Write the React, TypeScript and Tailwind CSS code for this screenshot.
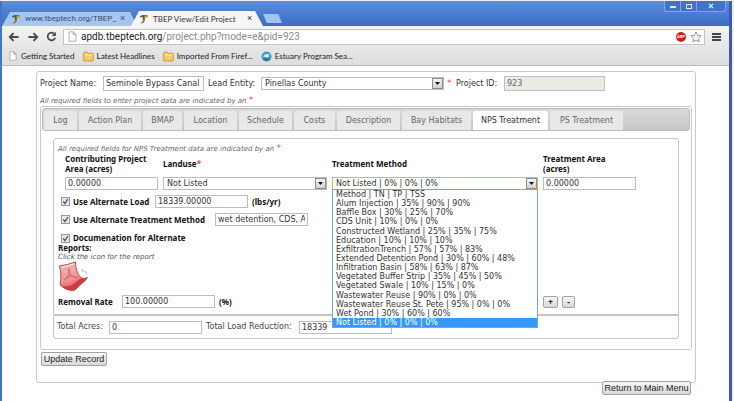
import { useState, type ReactNode } from "react";

const projectTabs = [
  { name: "Log", width: "w-[33px]" },
  { name: "Action Plan", width: "w-[62px]" },
  { name: "BMAP", width: "w-[39px]" },
  { name: "Location", width: "w-[53px]" },
  { name: "Schedule", width: "w-[53px]" },
  { name: "Costs", width: "w-[41px]" },
  { name: "Description", width: "w-[63px]" },
  { name: "Bay Habitats", width: "w-[69px]" },
  { name: "NPS Treatment", width: "w-[75px]" },
  { name: "PS Treatment", width: "w-[73px]" },
];

const methods = [
  "Method | TN | TP | TSS",
  "Alum Injection | 35% | 90% | 90%",
  "Baffle Box | 30% | 25% | 70%",
  "CDS Unit | 10% | 0% | 0%",
  "Constructed Wetland | 25% | 35% | 75%",
  "Education | 10% | 10% | 10%",
  "ExfiltrationTrench | 57% | 57% | 83%",
  "Extended Detention Pond | 30% | 60% | 48%",
  "Infiltration Basin | 58% | 63% | 87%",
  "Vegetated Buffer Strip | 35% | 45% | 50%",
  "Vegetated Swale | 10% | 15% | 0%",
  "Wastewater Reuse | 90% | 0% | 0%",
  "Wastewater Reuse St. Pete | 95% | 0% | 0%",
  "Wet Pond | 30% | 60% | 60%",
  "Not Listed | 0% | 0% | 0%",
];

const field =
  "border border-[#bdbdbd] bg-white px-[2px] font-['DejaVu_Sans',sans-serif] text-[8px] leading-[11px] font-normal text-[#333] outline-none";
const pushButton =
  "rounded-[2px] border border-[#a2a2a2] bg-linear-to-b from-[#f7f7f7] to-[#d9d9d9] text-[#222]";

function Star() {
  return <span className="text-[9px] leading-[8px] text-[#e8502e]">*</span>;
}

function SiteIcon() {
  return (
    <svg viewBox="0 0 10 10" className="size-[10px] shrink-0" aria-hidden="true">
      <path d="M1 2.2 C3 .8 6 .8 9 1.6 L8.6 3.2 L6 3 L5.6 7 C5.2 9 3.4 9.6 1.6 9.2 L3.6 7.8 L4 3.2 L1.4 3.6Z" fill="#5b5d45" />
      <path d="M5 2.6 L9 2 L8.6 3.4 L5.6 3.4Z" fill="#e2a83a" />
      <path d="M1.4 9.2 L4 8 L4.4 6" fill="none" stroke="#c99a3a" strokeWidth=".9" />
    </svg>
  );
}

function PageIcon({ className }: { className: string }) {
  return (
    <svg viewBox="0 0 9 11" className={className} aria-hidden="true">
      <path d="M1 .8h4.5L8 3.4v6.8H1z M5.3.8v2.8H8" fill="#fff" stroke="#9a9a9a" strokeWidth=".8" />
    </svg>
  );
}

function FolderIcon() {
  return (
    <svg viewBox="0 0 10 10" className="size-[11px] shrink-0" aria-hidden="true">
      <path d="M.6 1.6 Q.6 1 1.2 1h2.6l.9 1.1h4q.7 0 .7.7v5.6q0 .7-.7.7H1.3q-.7 0-.7-.7z" fill="#f3cb67" stroke="#c8922f" strokeWidth=".8" />
      <path d="M1.6 3.6h7" stroke="#fff0bd" strokeWidth="1" />
    </svg>
  );
}

function Check({ id }: { id: string }) {
  return (
    <span className="relative block size-[9px] shrink-0">
      <input
        id={id}
        type="checkbox"
        defaultChecked
        className="peer block size-[9px] appearance-none border border-[#9a9a9a] bg-[#e4e7ec]"
      />
      <svg viewBox="0 0 9 9" className="pointer-events-none invisible absolute inset-0 size-[9px] peer-checked:visible" aria-hidden="true">
        <path d="M2.2 4.4l1.7 2.2L6.9 2" fill="none" stroke="#44516e" strokeWidth="1.3" />
      </svg>
    </span>
  );
}

function DropSelect({
  id,
  width,
  border,
  value,
  children,
}: {
  id: string;
  width: string;
  border: string;
  value: string;
  children?: ReactNode;
}) {
  return (
    <span className={`relative block shrink-0 ${width}`}>
      <select
        id={id}
        defaultValue={value}
        className={`block h-[13px] w-full appearance-none border bg-white pr-3 pl-[3px] font-['DejaVu_Sans',sans-serif] text-[8px] leading-[11px] font-normal text-[#333] outline-none ${border}`}
      >
        <option>{value}</option>
      </select>
      <span className="pointer-events-none absolute top-px right-px flex h-[11px] w-[11px] items-center justify-center border border-[#8d8d8d] bg-linear-to-b from-[#f5f5f5] to-[#d2d2d2]">
        <svg viewBox="0 0 5 3" className="h-[3px] w-[5px]" aria-hidden="true">
          <path d="M0 0h5L2.5 3z" fill="#111" />
        </svg>
      </span>
      {children}
    </span>
  );
}

function TitleBar() {
  return (
    <div className="flex h-[25px] items-end bg-linear-to-b from-[#5a8ddb] to-[#3d6cc7]">
      <button className="flex h-[14px] w-[135px] items-center bg-[#a5c6f3] pr-[12px] pl-[9px] text-left text-[8px] text-[#3a4a66] [clip-path:polygon(0_100%,6%_0,95%_0,100%_100%)]">
        <SiteIcon />
        <span className="ml-[4px] flex-1 whitespace-nowrap">www.tbeptech.org/TBEP_</span>
        <span className="text-[9px]">×</span>
      </button>
      <button className="-ml-[6px] flex h-[15px] w-[132px] items-center bg-[#f6f6f6] pr-[11px] pl-[8px] text-left text-[8px] text-[#333] [clip-path:polygon(0_100%,6%_0,94%_0,100%_100%)]">
        <SiteIcon />
        <span className="ml-[4px] flex-1 font-[Lato,sans-serif] whitespace-nowrap">TBEP View/Edit Project</span>
        <span className="text-[9px]">×</span>
      </button>
      <button
        aria-label="New tab"
        className="mb-[3px] h-[9px] w-[19px] bg-[#a0c4f4] [clip-path:polygon(0_0,80%_0,100%_100%,20%_100%)]"
      />
      <div className="mr-[3px] ml-auto flex h-[11px] self-start rounded-b-[3px] border border-t-0 border-[#7fa5e4] bg-[#4273cb]">
        <button aria-label="Minimize" className="flex w-[16px] items-end justify-center border-r border-[#7fa5e4] pb-[3px]">
          <span className="h-[2px] w-[6px] bg-[#e4ecfa]" />
        </button>
        <button aria-label="Maximize" className="flex w-[16px] items-center justify-center border-r border-[#7fa5e4]">
          <span className="h-[5px] w-[6px] border border-[#e4ecfa]" />
        </button>
        <button aria-label="Close" className="flex w-[28px] items-center justify-center">
          <svg viewBox="0 0 6 6" className="size-[6px]" aria-hidden="true">
            <path d="M1 1l4 4M5 1L1 5" stroke="#e4ecfa" strokeWidth="1.2" />
          </svg>
        </button>
      </div>
    </div>
  );
}

function Toolbar() {
  return (
    <div className="flex h-[21px] items-center bg-linear-to-b from-[#f4f4f4] to-[#e6e6e6] pr-[8px] pl-[6px]">
      <button aria-label="Back">
        <svg viewBox="0 0 12 10" className="h-[10px] w-[12px]" aria-hidden="true">
          <path d="M5.5 1.2L1.8 5l3.7 3.8M2 5h8.6" fill="none" stroke="#4a4a4a" strokeWidth="1.9" />
        </svg>
      </button>
      <button aria-label="Forward" className="ml-[7px]">
        <svg viewBox="0 0 12 10" className="h-[10px] w-[12px]" aria-hidden="true">
          <path d="M6.5 1.2L10.2 5 6.5 8.8M10 5H1.4" fill="none" stroke="#4a4a4a" strokeWidth="1.9" />
        </svg>
      </button>
      <button aria-label="Reload" className="ml-[7px]">
        <svg viewBox="0 0 12 12" className="size-[11px]" aria-hidden="true">
          <path d="M9.2 3.2A4.2 4.2 0 1 0 10 7.4" fill="none" stroke="#4a4a4a" strokeWidth="1.9" />
          <path d="M10.8.8v4.6H6.2z" fill="#4a4a4a" />
        </svg>
      </button>
      <div className="ml-[6px] flex h-[16px] min-w-0 flex-1 items-center border border-[#c4c4c4] bg-white pr-[2px] pl-[4px]">
        <PageIcon className="h-[11px] w-[9px] shrink-0" />
        <div className="ml-[4px] flex-1 text-[10px] whitespace-nowrap text-[#8a8a8a]">
          <span className="text-[#222]">apdb.tbeptech.org</span>/project.php?mode=e&amp;pid=923
        </div>
        <span className="flex size-[10px] items-center justify-center rounded-full bg-[#c8281c] text-[4px] font-bold text-white">ABP</span>
        <svg viewBox="0 0 12 12" className="ml-[4px] size-[12px]" aria-hidden="true">
          <path d="M6 .9l1.5 3.4 3.7.4-2.8 2.5.8 3.7L6 9l-3.2 1.9.8-3.7L.8 4.7l3.7-.4z" fill="#fff" stroke="#8c8c8c" strokeWidth=".9" />
        </svg>
      </div>
      <button aria-label="Menu" className="ml-[7px] flex w-[9px] flex-col gap-px">
        <span className="h-[2px] bg-[#444]" />
        <span className="h-[2px] bg-[#444]" />
        <span className="h-[2px] bg-[#444]" />
      </button>
    </div>
  );
}

function Bookmarks() {
  return (
    <nav className="flex h-[19px] items-center gap-[8px] border-b border-[#bcbcbc] bg-linear-to-b from-[#e6e6e6] to-[#dedede] pl-[7px] font-[Lato,sans-serif] text-[8px] whitespace-nowrap text-[#222]">
      <a href="#start" className="flex items-center gap-[4px]">
        <PageIcon className="h-[10px] w-[8px]" />
        Getting Started
      </a>
      <a href="#news" className="flex items-center gap-[3px]">
        <FolderIcon />
        Latest Headlines
      </a>
      <a href="#imported" className="flex items-center gap-[3px]">
        <FolderIcon />
        Imported From Firef...
      </a>
      <a href="#estuary" className="flex items-center gap-[3px]">
        <svg viewBox="0 0 11 11" className="size-[11px]" aria-hidden="true">
          <circle cx="5.5" cy="5.5" r="5" fill="#3f9fc4" />
          <path d="M2 6c1-3 5-4 7-2-2 0-2 1-1 2-2 1-4-1-6 0z" fill="#d9f1f7" />
          <path d="M1.5 8c2-1 6-1 8 0-2 2.8-6 2.8-8 0z" fill="#2878a8" />
        </svg>
        Estuary Program Sea...
      </a>
    </nav>
  );
}

function ReportIcon() {
  return (
    <svg viewBox="0 0 31 31" className="block h-[31px] w-[31px]" aria-hidden="true">
      <defs>
        <linearGradient id="sheet" x1=".3" y1="0" x2=".6" y2="1">
          <stop offset="0" stopColor="#f3b3b1" />
          <stop offset=".55" stopColor="#ee9a98" />
          <stop offset="1" stopColor="#d9474a" />
        </linearGradient>
      </defs>
      <path d="M1.5 5 Q9 4 17.5 1 C17.5 7 19 13 23.5 17 Q26 18.5 29.5 16.5 C27 21 22 23 19.5 26.5 Q17 30 13.5 29.5 C9 29 5 27 2 23.5 C3.5 17 3 11 1.5 5Z" fill="url(#sheet)" stroke="#b04c4c" strokeWidth="1" />
      <path d="M2 23.5 C6 26 11 26 14 24 C18 21 20 19 23.5 17 Q26 18.5 29.5 16.5 C27 21 22 23 19.5 26.5 Q17 30 13.5 29.5 C9 29 5 27 2 23.5Z" fill="#cf3b3f" />
      <path d="M3.5 6 Q10 5 16 2.8" fill="none" stroke="#fdeeee" strokeWidth="1.2" />
      <path d="M6 19 C10 17 12.5 12 11 8 C9.5 12 14 17 19 16.5 C15 14 9 15.5 6 19Z" fill="none" stroke="#d86668" strokeWidth="1.1" />
      <path d="M24 8l1.5 3M27 10l1.5 2.5" stroke="#c98a8a" strokeWidth=".9" />
    </svg>
  );
}

function MethodList({ selected, onPick }: { selected: string; onPick: (name: string) => void }) {
  return (
    <ul
      role="listbox"
      aria-label="Treatment methods"
      className="absolute top-[12px] left-0 z-10 flex h-[139px] w-full flex-col border border-[#7fa6bd] bg-white font-['DejaVu_Sans',sans-serif] text-[8px] leading-[9px] font-normal text-[#333]"
    >
      {methods.map((name) => (
        <li
          key={name}
          role="option"
          aria-selected={name === selected}
          onClick={() => onPick(name)}
          className="flex flex-1 items-center pl-[3px] whitespace-nowrap aria-selected:bg-[#3399ff] aria-selected:text-white"
        >
          {name}
        </li>
      ))}
    </ul>
  );
}

function TreatmentForm() {
  const [method, setMethod] = useState("Not Listed | 0% | 0% | 0%");
  return (
    <>
      <section className="rounded-t-[3px] border border-[#c4c4c4] pt-[5px] pb-[6px] pl-[4px] text-[8px] font-bold text-[#111]">
        <p className="h-[9px] font-['DejaVu_Sans',sans-serif] text-[7px] leading-[9px] font-normal text-[#666] italic">
          All required fields for NPS Treatment data are indicated by an <Star />
        </p>
        <div className="grid grid-cols-[93px_164px_206px_93px] grid-rows-[24px_13px] gap-x-[5px] pl-[7px] leading-[10px]">
          <label htmlFor="area" className="pt-px">Contributing Project<br />Area (acres)</label>
          <label htmlFor="landuse" className="pt-[6px]">Landuse<Star /></label>
          <label htmlFor="method" className="pt-[6px]">Treatment Method</label>
          <label htmlFor="treated" className="pt-px">Treatment Area<br />(acres)</label>
          <input id="area" defaultValue="0.00000" className={`h-[13px] w-full ${field}`} />
          <DropSelect id="landuse" width="w-full" border="border-[#bdbdbd]" value="Not Listed" />
          <DropSelect key={method} id="method" width="w-full" border="border-[#d9b45a]" value={method}>
            <MethodList selected={method} onPick={setMethod} />
          </DropSelect>
          <input id="treated" defaultValue="0.00000" className={`h-[13px] w-full ${field}`} />
        </div>
        <div className="mt-[5px] flex h-[13px] items-center pl-[3px]">
          <Check id="altLoad" />
          <label htmlFor="altLoad" className="w-[85px] pl-[3px]">Use Alternate Load</label>
          <input aria-label="Alternate load" defaultValue="18339.00000" className={`h-[13px] w-[93px] ${field}`} />
          <span className="ml-[4px]">(lbs/yr)</span>
        </div>
        <div className="mt-[5px] flex h-[13px] items-center pl-[3px]">
          <Check id="altMethod" />
          <label htmlFor="altMethod" className="w-[145px] pl-[3px]">Use Alternate Treatment Method</label>
          <input aria-label="Alternate treatment method" defaultValue="wet detention, CDS, Alum" className={`h-[13px] w-[93px] ${field}`} />
        </div>
        <div className="mt-[7px] flex h-[10px] items-center pl-[3px]">
          <Check id="altDoc" />
          <label htmlFor="altDoc" className="pl-[3px]">Documenation for Alternate</label>
        </div>
        <p className="leading-[10px]">Reports:</p>
        <p className="font-['DejaVu_Sans',sans-serif] text-[7px] leading-[8px] font-normal text-[#555] italic">Click the icon for the report</p>
        <a href="#report" aria-label="Open the report" className="block w-[31px]">
          <ReportIcon />
        </a>
        <div className="mt-[3px] flex h-[13px] items-center">
          <label htmlFor="rate" className="w-[64px]">Removal Rate</label>
          <input id="rate" defaultValue="100.00000" className={`h-[13px] w-[93px] ${field}`} />
          <span className="w-[328px] pl-[4px]">(%)</span>
          <button className={`h-[12px] w-[15px] leading-[9px] ${pushButton}`}>+</button>
          <button className={`ml-[4px] h-[12px] w-[13px] leading-[9px] ${pushButton}`}>-</button>
        </div>
      </section>
      <section className="flex h-[24px] items-center rounded-b-[3px] border border-[#c4c4c4] pl-[3px] font-['DejaVu_Sans',sans-serif] text-[8px] text-[#444]">
        <label htmlFor="acres" className="w-[52px] whitespace-nowrap">Total Acres:</label>
        <input id="acres" defaultValue="0" className={`h-[13px] w-[93px] ${field}`} />
        <label htmlFor="reduction" className="ml-[4px] w-[93px] whitespace-nowrap">Total Load Reduction:</label>
        <input id="reduction" defaultValue="18339" className={`h-[13px] w-[93px] ${field}`} />
      </section>
    </>
  );
}

export default function App() {
  return (
    <div className="flex min-h-screen flex-col bg-[#eef2f6] pt-px pr-[2px] font-['Noto_Sans',sans-serif]">
      <div className="flex flex-1 flex-col border-r-3 border-l-2 border-r-[#3c5ba9] border-l-[#4674cd] bg-white">
        <header className="font-[Roboto,sans-serif]">
          <TitleBar />
          <Toolbar />
          <Bookmarks />
        </header>
        <main className="flex-1 pt-[5px] pr-[33px] pl-[34px]">
          <div className="rounded-[3px] border border-[#c8c8c8] px-[3px] pt-[4px] pb-[16px]">
            <div className="flex h-[15px] items-center font-['DejaVu_Sans',sans-serif] text-[8px] whitespace-nowrap text-[#333]">
              <label htmlFor="projectName" className="w-[63px]">Project Name:</label>
              <input id="projectName" defaultValue="Seminole Bypass Canal Project" className={`h-[15px] w-[101px] ${field}`} />
              <label htmlFor="lead" className="ml-[4px] w-[53px]">Lead Entity:</label>
              <DropSelect id="lead" width="w-[183px]" border="border-[#bdbdbd]" value="Pinellas County" />
              <span className="w-[12px] pl-[3px]"><Star /></span>
              <label htmlFor="projectId" className="w-[48px]">Project ID:</label>
              <input id="projectId" readOnly defaultValue="923" className="h-[15px] w-[101px] border border-[#c0c0c0] bg-[#ebebe4] px-[2px] text-[8px] text-[#666] outline-none" />
            </div>
            <p className="mt-[5px] h-[9px] font-['DejaVu_Sans',sans-serif] text-[7px] leading-[9px] text-[#666] italic">
              All required fields to enter project data are indicated by an <Star />
            </p>
            <div className="mt-px rounded-[3px] border border-[#c8c8c8] p-px pb-[10px]">
              <div role="tablist" className="flex h-[23px] items-end gap-[2px] rounded-[3px] border border-[#bbb] bg-linear-to-b from-[#dadada] to-[#c6c6c6] pl-px font-['DejaVu_Sans',sans-serif] text-[8px]">
                {projectTabs.map((tab) => (
                  <button
                    key={tab.name}
                    role="tab"
                    aria-selected={tab.name === "NPS Treatment"}
                    className={`h-[19px] rounded-t-[2px] bg-[#e8e8e8] whitespace-nowrap text-[#666] aria-selected:bg-white aria-selected:text-[#333] ${tab.width}`}
                  >
                    {tab.name}
                  </button>
                ))}
              </div>
              <div className="px-[11px] pt-[7px]">
                <TreatmentForm />
              </div>
            </div>
            <button className={`mt-[2px] ml-px block h-[14px] w-[66px] font-['Liberation_Sans',sans-serif] text-[9px] leading-[11px] whitespace-nowrap ${pushButton}`}>
              Update Record
            </button>
          </div>
          <div className="-mt-[2px] flex justify-end pr-[5px]">
            <button className={`relative h-[14px] w-[89px] font-['Liberation_Sans',sans-serif] text-[9px] leading-[11px] whitespace-nowrap ${pushButton}`}>
              Return to Main Menu
            </button>
          </div>
        </main>
      </div>
    </div>
  );
}
